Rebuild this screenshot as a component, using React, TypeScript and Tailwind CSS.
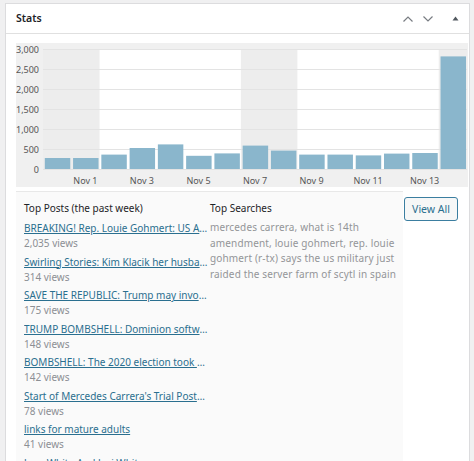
import React from "react";

const views = [275, 275, 360, 525, 615, 330, 390, 585, 460, 360, 360, 340, 385, 400, 2815];
const xLabels = ["Nov 1", "Nov 3", "Nov 5", "Nov 7", "Nov 9", "Nov 11", "Nov 13"];
const yTicks = [3000, 2500, 2000, 1500, 1000, 500, 0];

const posts = [
    { title: "BREAKING! Rep. Louie Gohmert: US Army Raided Server Farm in Germany", views: "2,035" },
    { title: "Swirling Stories: Kim Klacik her husband and the election", views: "314" },
    { title: "SAVE THE REPUBLIC: Trump may invoke the Insurrection Act", views: "175" },
    { title: "TRUMP BOMBSHELL: Dominion software was used to switch votes", views: "148" },
    { title: "BOMBSHELL: The 2020 election took place in Germany", views: "142" },
    { title: "Start of Mercedes Carrera's Trial Postponed", views: "78" },
    { title: "links for mature adults", views: "41" },
    { title: "Jean White And Jesi White", views: "33" },
];

const PLOT_X = 27;
const PLOT_Y = 6;
const PLOT_H = 120;
const SLOT = 424 / 15;
const SCALE = PLOT_H / 3000;

const Chart = () => (
    <svg width={452} height={144} className="block">
        <rect x={PLOT_X} y={PLOT_Y} width={424} height={PLOT_H} fill="#ffffff" />
        <rect x={PLOT_X} y={PLOT_Y} width={SLOT * 2} height={PLOT_H} fill="#ededed" />
        <rect x={PLOT_X + SLOT * 7} y={PLOT_Y} width={SLOT * 2} height={PLOT_H} fill="#ededed" />
        <rect x={PLOT_X + SLOT * 14} y={PLOT_Y} width={SLOT} height={PLOT_H} fill="#ededed" />
        {yTicks.map((t, i) => (
            <g key={t}>
                <line x1={PLOT_X} x2={451} y1={PLOT_Y + i * 20 + 0.5} y2={PLOT_Y + i * 20 + 0.5} stroke="#e3e3e3" />
                <text
                    x={23}
                    y={PLOT_Y + i * 20 + 3.5}
                    textAnchor="end"
                    fontSize={9}
                    fill="#555"
                    fontFamily="'Noto Sans', sans-serif"
                >
                    {t.toLocaleString("en-US")}
                </text>
            </g>
        ))}
        {views.map((v, i) => (
            <rect
                key={i}
                x={PLOT_X + i * SLOT + 1.8}
                y={PLOT_Y + PLOT_H - v * SCALE}
                width={SLOT - 2.8}
                height={v * SCALE}
                fill="#8ab6cc"
            />
        ))}
        {xLabels.map((l, i) => (
            <text
                key={l}
                x={PLOT_X + (i * 2 + 1.5) * SLOT}
                y={141}
                textAnchor="middle"
                fontSize={9}
                fill="#555"
                fontFamily="'Noto Sans', sans-serif"
            >
                {l}
            </text>
        ))}
    </svg>
);

const Chevron = ({ up }: { up?: boolean }) => (
    <svg width={12} height={8} viewBox="0 0 12 8" fill="none" stroke="#787c82" strokeWidth={1.2}>
        {up ? <path d="M1.5 6.5 L6 2 L10.5 6.5" /> : <path d="M1.5 1.5 L6 6 L10.5 1.5" />}
    </svg>
);

export default function App() {
    return (
        <div className="w-[474px] h-[461px] overflow-hidden bg-[#f0f0f1] pt-[3px] pl-[5px] font-['Noto_Sans',sans-serif]">
            <div className="w-[465px] h-[470px] bg-white border border-[#dcdcde]">
                <div className="h-[30px] flex items-center pl-[10px] pr-[10px] border-b border-[#e0e0e0]">
                    <h2 className="text-[10.5px] font-semibold text-[#1d2327] flex-1">Stats</h2>
                    <div className="flex items-center gap-[8px]">
                        <Chevron up />
                        <Chevron />
                        <svg width={7} height={5} viewBox="0 0 7 5" className="ml-[10px]">
                            <path d="M0.5 4.5 L3.5 0.5 L6.5 4.5 Z" fill="#50575e" />
                        </svg>
                    </div>
                </div>

                <div className="pl-[10px] pt-[9px]">
                    <div className="w-[452px] bg-[#f0f0f0]">
                        <Chart />
                    </div>

                    <div className="flex mt-[4px]">
                        <div className="w-[387px] flex bg-[#fafafa] border-t border-[#e8e8e8] pl-[8px] pt-[7px] h-[300px]">
                            <div className="w-[186px] shrink-0">
                                <h3 className="text-[10px] leading-[18px] text-[#1d2327] mb-[3px]">
                                    Top Posts (the past week)
                                </h3>
                                {posts.map((p) => (
                                    <div key={p.title} className="mb-[2px]">
                                        <a
                                            href="#"
                                            className="block text-[10px] leading-[16px] text-[#2a6f8f] underline truncate"
                                        >
                                            {p.title}
                                        </a>
                                        <div className="text-[10px] leading-[15.5px] text-[#8c8f94]">
                                            {p.views} views
                                        </div>
                                    </div>
                                ))}
                            </div>
                            <div className="flex-1">
                                <h3 className="text-[10px] leading-[18px] text-[#1d2327] mb-[3px]">Top Searches</h3>
                                <p className="text-[10px] tracking-[0.15px] leading-[15.5px] text-[#939598] whitespace-nowrap">
                                    mercedes carrera, what is 14th
                                    <br />
                                    amendment, louie gohmert, rep. louie
                                    <br />
                                    gohmert (r-tx) says the us military just
                                    <br />
                                    raided the server farm of scytl in spain
                                </p>
                            </div>
                        </div>
                        <div className="pl-[1px] pt-[4px]">
                            <button className="h-[24px] w-[54px] rounded-[3px] border border-[#3b7ea0] bg-[#f6f7f7] text-[10.5px] text-[#2a6f8f] leading-none">
                                View All
                            </button>
                        </div>
                    </div>
                </div>
            </div>
        </div>
    );
}
